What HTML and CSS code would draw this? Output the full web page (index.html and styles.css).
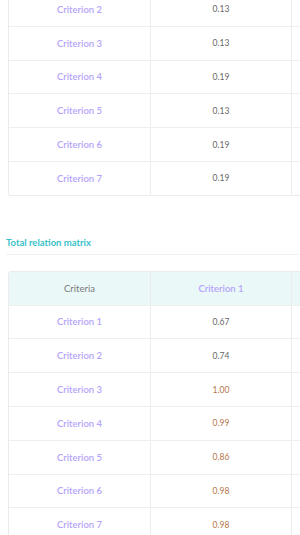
FILE: index.html
```html
<!DOCTYPE html>
<html>
<head>
<meta charset="utf-8">
<link rel="stylesheet" href="styles.css">
</head>
<body>
<div class="page">
  <div class="table-wrap table-top">
    <div class="row"><div class="cell name">Criterion 2</div><div class="cell val">0.13</div><div class="cell"></div></div>
    <div class="row"><div class="cell name">Criterion 3</div><div class="cell val">0.13</div><div class="cell"></div></div>
    <div class="row"><div class="cell name">Criterion 4</div><div class="cell val">0.19</div><div class="cell"></div></div>
    <div class="row"><div class="cell name">Criterion 5</div><div class="cell val">0.13</div><div class="cell"></div></div>
    <div class="row"><div class="cell name">Criterion 6</div><div class="cell val">0.19</div><div class="cell"></div></div>
    <div class="row"><div class="cell name">Criterion 7</div><div class="cell val">0.19</div><div class="cell"></div></div>
  </div>

  <h2 class="section-title">Total relation matrix</h2>

  <div class="table-wrap table-bottom">
    <div class="row head"><div class="cell hcrit">Criteria</div><div class="cell name">Criterion 1</div><div class="cell"></div></div>
    <div class="row"><div class="cell name">Criterion 1</div><div class="cell val">0.67</div><div class="cell"></div></div>
    <div class="row"><div class="cell name">Criterion 2</div><div class="cell val">0.74</div><div class="cell"></div></div>
    <div class="row"><div class="cell name">Criterion 3</div><div class="cell val hi">1.00</div><div class="cell"></div></div>
    <div class="row"><div class="cell name">Criterion 4</div><div class="cell val hi">0.99</div><div class="cell"></div></div>
    <div class="row"><div class="cell name">Criterion 5</div><div class="cell val hi">0.86</div><div class="cell"></div></div>
    <div class="row"><div class="cell name">Criterion 6</div><div class="cell val hi">0.98</div><div class="cell"></div></div>
    <div class="row"><div class="cell name">Criterion 7</div><div class="cell val hi">0.98</div><div class="cell"></div></div>
  </div>
</div>
</body>
</html>
```
FILE: styles.css
```css
html, body {
  margin: 0;
  padding: 0;
  background: #fff;
}
body {
  font-family: Lato, "Open Sans", sans-serif;
  width: 300px;
  height: 535px;
  overflow: hidden;
}
.page {
  padding-left: 6px;
  overflow: hidden;
  height: 535px;
}
.table-wrap {
  margin-left: 2px;
  width: 430px;
  border: 1px solid #ebebeb;
  border-radius: 3px;
  background: #fff;
}
.table-top {
  margin-top: -7px;
  border-top: none;
  border-top-left-radius: 0;
  border-top-right-radius: 0;
}
.row {
  display: grid;
  grid-template-columns: 142px 141px 1fr;
  height: 32.8px;
  border-bottom: 1px solid #efefef;
}
.row:last-child {
  border-bottom: none;
}
.cell {
  display: flex;
  align-items: center;
  justify-content: center;
  border-right: 1px solid #ececec;
  font-size: 9.5px;
}
.name {
  color: #b5a3fb;
  font-weight: 600;
}
.val {
  color: #666;
  font-size: 8.5px;
}
.val.hi {
  color: #b4764a;
}
.head {
  background: #eaf8f8;
}
.hcrit {
  color: #7a7a7a;
}
.section-title {
  margin: 40px 0 0 0;
  padding: 0 0 4px 0;
  font-size: 9.5px;
  line-height: 14px;
  font-weight: 700;
  color: #38bfc8;
  border-bottom: 1px solid #eef4f4;
}
.table-bottom {
  margin-top: 16px;
}
```
